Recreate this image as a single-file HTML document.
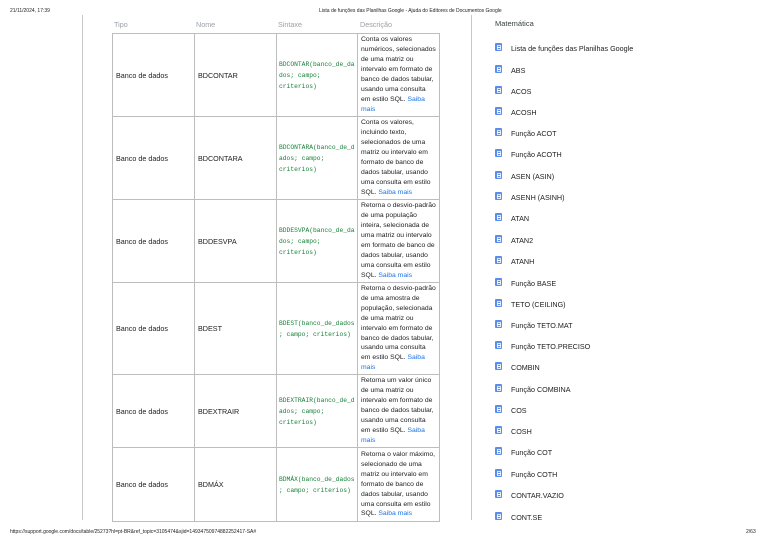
<!DOCTYPE html>
<html><head><meta charset="utf-8"><style>
*{margin:0;padding:0;box-sizing:border-box}
body{width:768px;height:543px;background:#fff;position:relative;overflow:hidden;font-family:"Liberation Sans",sans-serif;color:#202124}
.a{position:absolute;white-space:nowrap}
.hd{font-size:5px;color:#222}
.th{font-size:7.2px;color:#9aa0a6;top:20px}
table{position:absolute;left:112px;top:33px;border-collapse:collapse;table-layout:fixed;width:327px}
td{border:1px solid #bdbdbd;vertical-align:middle;font-size:7.2px;padding:0 3px;white-space:nowrap;overflow:hidden}
td.d{padding:1px 1px 1px 3px;line-height:9.9px;font-size:6.8px}
td.c{font-family:"Liberation Mono",monospace;font-size:6.3px;color:#188038;line-height:11px;padding:0 1px 0 2px}
a{color:#1a73e8;text-decoration:none}
.it{position:absolute;left:511px;font-size:7.2px;color:#202124}
.ic{position:absolute;left:495px;width:7px;height:8px;background:#5b8def;border-radius:1px}
.ic:after{content:"";position:absolute;left:1.5px;top:3.5px;width:4px;height:1px;background:#fff}
.ic:before{content:"";position:absolute;left:1.5px;top:1.5px;width:4px;height:5px;border:0.5px solid #dbe6ff;box-sizing:border-box}
</style></head><body>
<div class="a hd" style="left:10px;top:8px">21/11/2024, 17:39</div>
<div class="a hd" style="left:319px;top:8px">Lista de funções das Planilhas Google - Ajuda do Editores de Documentos Google</div>
<div class="a" style="left:82px;top:15px;width:1px;height:505px;background:#c8c8c8"></div>
<div class="a" style="left:471px;top:15px;width:1px;height:505px;background:#c8c8c8"></div>
<div class="a th" style="left:114px">Tipo</div>
<div class="a th" style="left:196px">Nome</div>
<div class="a th" style="left:278px">Sintaxe</div>
<div class="a th" style="left:360px">Descrição</div>
<table>
<colgroup><col style="width:82px"><col style="width:82px"><col style="width:81px"><col style="width:82px"></colgroup>
<tr style="height:83px"><td>Banco de dados</td><td>BDCONTAR</td><td class="c">BDCONTAR(banco_de_da<br>dos; campo;<br>criterios)</td><td class="d">Conta os valores<br>numéricos, selecionados<br>de uma matriz ou<br>intervalo em formato de<br>banco de dados tabular,<br>usando uma consulta<br>em estilo SQL. <a>Saiba</a><br><a>mais</a></td></tr>
<tr style="height:83px"><td>Banco de dados</td><td>BDCONTARA</td><td class="c">BDCONTARA(banco_de_d<br>ados; campo;<br>criterios)</td><td class="d">Conta os valores,<br>incluindo texto,<br>selecionados de uma<br>matriz ou intervalo em<br>formato de banco de<br>dados tabular, usando<br>uma consulta em estilo<br>SQL. <a>Saiba mais</a></td></tr>
<tr style="height:83px"><td>Banco de dados</td><td>BDDESVPA</td><td class="c">BDDESVPA(banco_de_da<br>dos; campo;<br>criterios)</td><td class="d">Retorna o desvio-padrão<br>de uma população<br>inteira, selecionada de<br>uma matriz ou intervalo<br>em formato de banco de<br>dados tabular, usando<br>uma consulta em estilo<br>SQL. <a>Saiba mais</a></td></tr>
<tr style="height:91px"><td>Banco de dados</td><td>BDEST</td><td class="c">BDEST(banco_de_dados<br>; campo; criterios)</td><td class="d">Retorna o desvio-padrão<br>de uma amostra de<br>população, selecionada<br>de uma matriz ou<br>intervalo em formato de<br>banco de dados tabular,<br>usando uma consulta<br>em estilo SQL. <a>Saiba</a><br><a>mais</a></td></tr>
<tr style="height:73px"><td>Banco de dados</td><td>BDEXTRAIR</td><td class="c">BDEXTRAIR(banco_de_d<br>ados; campo;<br>criterios)</td><td class="d">Retorna um valor único<br>de uma matriz ou<br>intervalo em formato de<br>banco de dados tabular,<br>usando uma consulta<br>em estilo SQL. <a>Saiba</a><br><a>mais</a></td></tr>
<tr style="height:74px"><td>Banco de dados</td><td>BDMÁX</td><td class="c">BDMÁX(banco_de_dados<br>; campo; criterios)</td><td class="d">Retorna o valor máximo,<br>selecionado de uma<br>matriz ou intervalo em<br>formato de banco de<br>dados tabular, usando<br>uma consulta em estilo<br>SQL. <a>Saiba mais</a></td></tr>
</table>
<div class="a" style="left:495px;top:19px;font-size:7.5px;color:#3c4043">Matemática</div>
<div class="ic" style="top:43px"></div><div class="it" style="top:44px">Lista de funções das Planilhas Google</div>
<div class="ic" style="top:65px"></div><div class="it" style="top:66px">ABS</div>
<div class="ic" style="top:86px"></div><div class="it" style="top:87px">ACOS</div>
<div class="ic" style="top:107px"></div><div class="it" style="top:108px">ACOSH</div>
<div class="ic" style="top:128px"></div><div class="it" style="top:129px">Função ACOT</div>
<div class="ic" style="top:149px"></div><div class="it" style="top:150px">Função ACOTH</div>
<div class="ic" style="top:171px"></div><div class="it" style="top:172px">ASEN (ASIN)</div>
<div class="ic" style="top:192px"></div><div class="it" style="top:193px">ASENH (ASINH)</div>
<div class="ic" style="top:213px"></div><div class="it" style="top:214px">ATAN</div>
<div class="ic" style="top:235px"></div><div class="it" style="top:236px">ATAN2</div>
<div class="ic" style="top:256px"></div><div class="it" style="top:257px">ATANH</div>
<div class="ic" style="top:278px"></div><div class="it" style="top:279px">Função BASE</div>
<div class="ic" style="top:299px"></div><div class="it" style="top:300px">TETO (CEILING)</div>
<div class="ic" style="top:320px"></div><div class="it" style="top:321px">Função TETO.MAT</div>
<div class="ic" style="top:341px"></div><div class="it" style="top:342px">Função TETO.PRECISO</div>
<div class="ic" style="top:362px"></div><div class="it" style="top:363px">COMBIN</div>
<div class="ic" style="top:384px"></div><div class="it" style="top:385px">Função COMBINA</div>
<div class="ic" style="top:405px"></div><div class="it" style="top:406px">COS</div>
<div class="ic" style="top:426px"></div><div class="it" style="top:427px">COSH</div>
<div class="ic" style="top:447px"></div><div class="it" style="top:448px">Função COT</div>
<div class="ic" style="top:469px"></div><div class="it" style="top:470px">Função COTH</div>
<div class="ic" style="top:490px"></div><div class="it" style="top:491px">CONTAR.VAZIO</div>
<div class="ic" style="top:512px"></div><div class="it" style="top:513px">CONT.SE</div>
<div class="a hd" style="left:10px;top:529px">https://support.google.com/docs/table/25273?hl=pt-BR&amp;ref_topic=3105474&amp;sjid=14934750974882252417-SA#</div>
<div class="a hd" style="left:746px;top:529px">2/63</div>
</body></html>
